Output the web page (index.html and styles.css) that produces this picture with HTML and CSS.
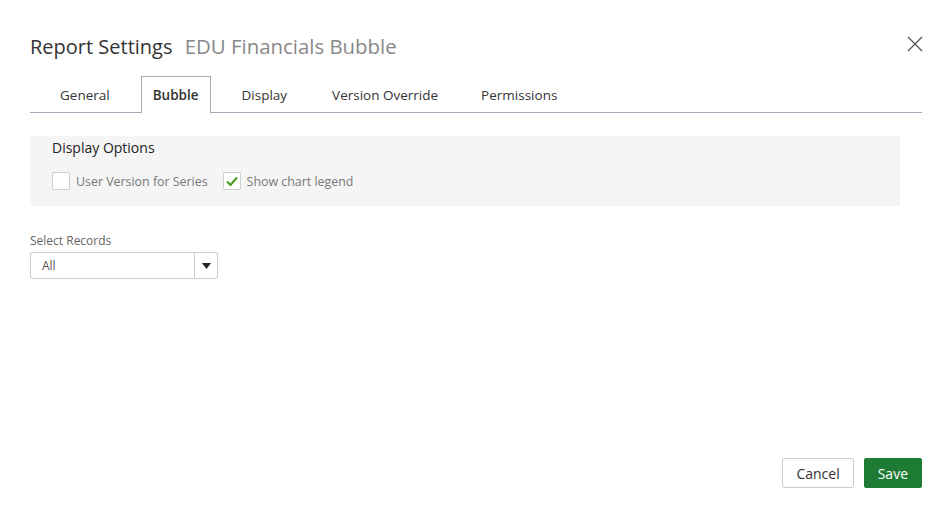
FILE: index.html
```html
<!DOCTYPE html>
<html>
<head>
<meta charset="utf-8">
<link rel="stylesheet" href="styles.css">
</head>
<body>
<div class="dialog">
  <div class="header">
    <h1 class="title">Report Settings <span class="subtitle">EDU Financials Bubble</span></h1>
    <button class="close" aria-label="Close">
      <svg width="16" height="16" viewBox="0 0 16 16"><path d="M1 1 L15 15 M15 1 L1 15" stroke="#555" stroke-width="1.3" fill="none"/></svg>
    </button>
  </div>
  <div class="tabs">
    <div class="tab">General</div>
    <div class="tab active">Bubble</div>
    <div class="tab">Display</div>
    <div class="tab">Version Override</div>
    <div class="tab tab-last">Permissions</div>
  </div>
  <div class="panel">
    <div class="panel-title">Display Options</div>
    <div class="checks">
      <label class="check"><span class="box"></span>User Version for Series</label>
      <label class="check"><span class="box checked"><svg width="14" height="12" viewBox="0 0 14 12"><path d="M2 6.5 L5.5 10 L12 2.5" stroke="#4c9a1c" stroke-width="2" fill="none"/></svg></span>Show chart legend</label>
    </div>
  </div>
  <div class="field">
    <div class="field-label">Select Records</div>
    <div class="select">
      <span class="select-value">All</span>
      <span class="select-arrow"><svg width="9" height="6" viewBox="0 0 9 6"><path d="M0 0 L9 0 L4.5 6 Z" fill="#222"/></svg></span>
    </div>
  </div>
  <div class="footer">
    <button class="btn btn-cancel">Cancel</button>
    <button class="btn btn-save">Save</button>
  </div>
</div>
</body>
</html>
```
FILE: styles.css
```css
html, body {
  margin: 0;
  padding: 0;
  background: #fff;
}
body {
  font-family: "Open Sans", "Noto Sans", sans-serif;
  color: #333;
}
.dialog {
  height: 521px;
  box-sizing: border-box;
  padding: 32px 30px 33px 30px;
  display: flex;
  flex-direction: column;
}
.header {
  display: flex;
  justify-content: space-between;
  align-items: flex-start;
  height: 28px;
}
.title {
  margin: 0;
  font-size: 20px;
  font-weight: 400;
  line-height: 28px;
  color: #333;
}
.subtitle {
  color: #888;
  margin-left: 7px;
  font-size: 20.4px;
}
.close {
  border: none;
  background: none;
  padding: 0;
  margin: 4px -1px 0 0;
  width: 16px;
  height: 16px;
  cursor: pointer;
}
.tabs {
  margin-top: 16px;
  display: flex;
  gap: 17px;
  padding-left: 16px;
  border-bottom: 1px solid #a3adba;
  height: 36px;
}
.tab {
  font-size: 13.5px;
  color: #333;
  padding: 0 13px;
  line-height: 36px;
  height: 36px;
  box-sizing: border-box;
  border: 1px solid transparent;
  border-bottom: none;
}
.tab-last {
  margin-left: -2px;
}
.tab.active {
  border-color: #a3adba;
  background: #fff;
  height: 37px;
  margin-bottom: -1px;
  font-weight: 600;
  padding: 0 11px;
  line-height: 36px;
}
.panel {
  margin-top: 23px;
  margin-right: 22px;
  background: #f5f5f5;
  height: 70px;
  box-sizing: border-box;
  padding: 2px 22px 0 22px;
}
.panel-title {
  font-size: 14px;
  line-height: 20px;
  color: #222;
}
.checks {
  margin-top: 14px;
  display: flex;
  gap: 15px;
}
.check {
  display: flex;
  align-items: center;
  font-size: 12.4px;
  color: #777;
  gap: 6px;
}
.box {
  width: 16px;
  height: 16px;
  border: 1px solid #cfcfcf;
  border-radius: 2px;
  background: #fff;
  display: flex;
  align-items: center;
  justify-content: center;
}
.field {
  margin-top: 27px;
}
.field-label {
  font-size: 12px;
  color: #666;
  line-height: 16px;
}
.select {
  margin-top: 3px;
  width: 188px;
  height: 27px;
  box-sizing: border-box;
  border: 1px solid #ccc;
  border-radius: 2px;
  display: flex;
  align-items: stretch;
}
.select-value {
  flex: 1;
  font-size: 12px;
  color: #555;
  padding-left: 11px;
  line-height: 26px;
}
.select-arrow {
  width: 22px;
  border-left: 1px solid #ccc;
  display: flex;
  align-items: center;
  justify-content: center;
}
.footer {
  margin-top: auto;
  display: flex;
  justify-content: flex-end;
  gap: 10px;
}
.btn {
  font-family: "Open Sans", "Noto Sans", sans-serif;
  font-size: 14px;
  height: 30px;
  padding: 0 13px;
  border-radius: 2px;
  cursor: pointer;
}
.btn-cancel {
  background: #fff;
  border: 1px solid #ccc;
  color: #333;
}
.btn-save {
  background: #1d7b33;
  border: 1px solid #1d7b33;
  color: #fff;
}
```
